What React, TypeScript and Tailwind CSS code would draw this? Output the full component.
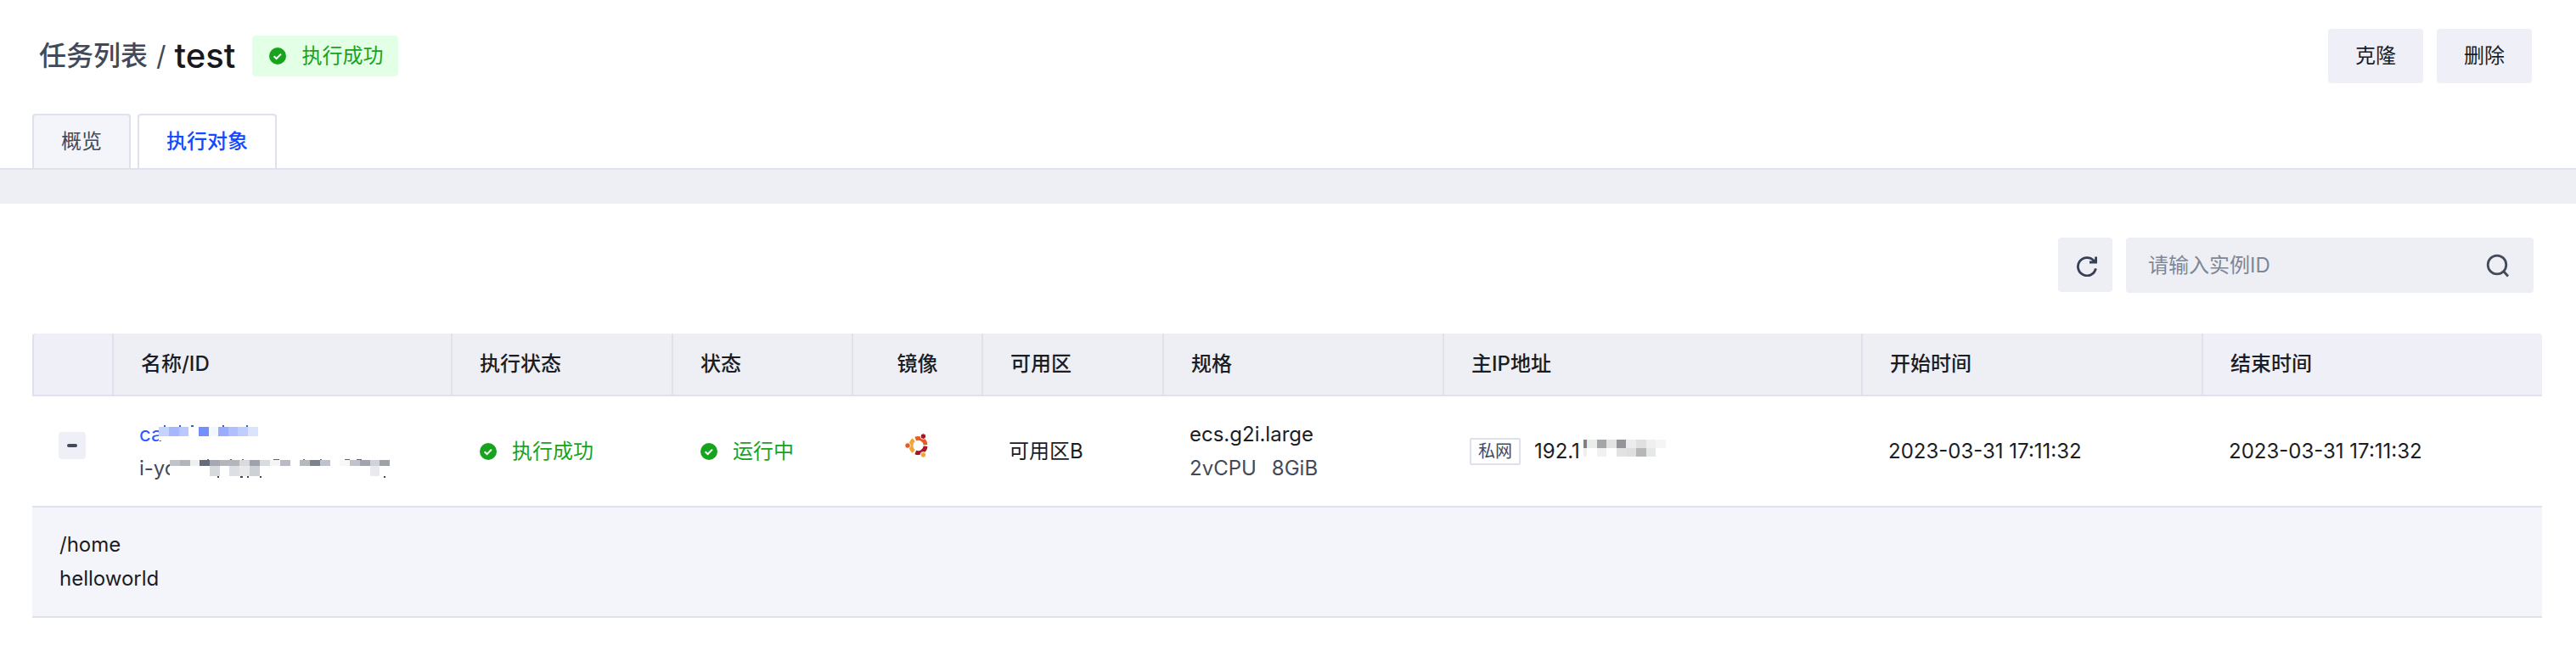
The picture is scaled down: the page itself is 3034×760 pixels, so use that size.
import React from "react";

function CheckBadge() {
  return (
    <svg viewBox="0 0 20 20" className="size-5 shrink-0" aria-hidden="true">
      <circle cx="10" cy="10" r="10" fill="#18a31f" />
      <path d="M5.6 10.2l3 2.8 5.4-5.4" fill="none" stroke="#fff" strokeWidth="2" />
    </svg>
  );
}

function UbuntuLogo() {
  return (
    <svg viewBox="0 0 28 30" className="h-[30px] w-7" aria-label="Ubuntu" role="img">
      <g fill="none" strokeWidth="4.8">
        <path d="M10.2 21.78 A8.6 8.6 0 0 1 10.2 8.22" stroke="#f4a42f" />
        <path d="M12.28 7.03 A8.6 8.6 0 0 1 24.07 14.25" stroke="#e95a24" />
        <path d="M24.07 15.75 A8.6 8.6 0 0 1 12.28 22.97" stroke="#ab1420" />
      </g>
      <g stroke="#fff" strokeWidth="1">
        <circle cx="3" cy="15" r="3.3" fill="#e95a24" />
        <circle cx="21.4" cy="4.1" r="3.3" fill="#ab1420" />
        <circle cx="21.4" cy="25.9" r="3.3" fill="#f4a42f" />
      </g>
    </svg>
  );
}

type Block = [number, number, number, number, string];

const nameBlocks: Block[] = [
  [0, 2, 12, 11, "#c6d3ff"], [12, 2, 12, 11, "#a6b7ff"], [24, 2, 11, 11, "#bac8ff"],
  [47, 2, 12, 11, "#7390ff"], [59, 2, 11, 11, "#f3f7ff"], [70, 2, 12, 11, "#9bacff"],
  [82, 2, 11, 11, "#afbfff"], [93, 2, 12, 11, "#c0cdff"], [105, 2, 12, 11, "#dbe4ff"],
  [6, 0, 2, 2, "#2a57ff"], [24, 0, 2, 2, "#2a57ff"], [38, 0, 3, 2, "#2a57ff"], [75, 0, 2, 2, "#2a57ff"], [103, 0, 2, 2, "#2a57ff"],
];

const idBlocks: Block[] = [
  [0, 1, 12, 7, "#c0c4c9"], [12, 1, 12, 7, "#b0b5bb"], [24, 1, 11, 7, "#eeeff0"], [35, 1, 12, 7, "#646b79"],
  [47, 1, 12, 7, "#a5a8b2"], [59, 1, 23, 7, "#b4b6bb"], [82, 1, 12, 7, "#d8dade"], [94, 1, 12, 7, "#9da2ac"],
  [106, 1, 12, 7, "#d9dcdf"], [118, 1, 12, 7, "#f5f5f6"], [130, 1, 12, 7, "#b7bbc2"],
  [153, 1, 12, 7, "#b5b9be"], [165, 1, 12, 7, "#7a828d"], [177, 1, 12, 7, "#c0c3c9"],
  [200, 1, 12, 7, "#f8f8f8"], [212, 1, 12, 7, "#c0c3c9"], [224, 1, 12, 7, "#9fa4ad"], [236, 1, 11, 7, "#cfd2d8"], [247, 1, 12, 7, "#9da2a9"],
  [47, 8, 12, 12, "#d7d9dd"], [70, 8, 12, 12, "#dcdfe4"], [82, 8, 12, 12, "#e9e9eb"], [94, 8, 12, 12, "#cdd0d5"], [236, 8, 11, 12, "#e9eaee"],
  [44, 0, 2, 1, "#5a6270"], [71, 0, 2, 1, "#5a6270"], [85, 0, 2, 1, "#5a6270"], [122, 0, 7, 1, "#5a6270"], [157, 0, 2, 1, "#5a6270"],
  [177, 0, 2, 1, "#5a6270"], [206, 0, 6, 1, "#5a6270"], [220, 0, 6, 1, "#5a6270"],
  [56, 20, 2, 2, "#3f4858"], [83, 20, 3, 2, "#3f4858"], [91, 20, 2, 2, "#3f4858"], [106, 20, 2, 2, "#3f4858"], [252, 20, 2, 2, "#3f4858"],
];

const ipBlocks: Block[] = [
  [0, 0, 4, 10, "#808185"], [4, 0, 12, 10, "#ebecec"], [16, 0, 11, 10, "#a5a6a9"], [27, 0, 12, 10, "#e3e3e4"],
  [39, 0, 11, 10, "#949599"], [50, 0, 12, 10, "#ececed"], [62, 0, 12, 10, "#dfe0e0"], [74, 0, 11, 10, "#efefef"], [85, 0, 12, 10, "#f5f5f5"],
  [0, 10, 4, 10, "#efefef"], [16, 10, 11, 10, "#f1f1f1"], [39, 10, 12, 10, "#e2e2e3"], [51, 10, 11, 10, "#dfdfe0"],
  [62, 10, 12, 10, "#b6b7b9"], [74, 10, 11, 10, "#e6e7e7"],
];

function Mosaic({ blocks, width, height }: { blocks: Block[]; width: number; height: number }) {
  return (
    <svg width={width} height={height} viewBox={`0 0 ${width} ${height}`} shapeRendering="crispEdges" aria-hidden="true" className="relative shrink-0 bg-white">
      {blocks.map(([x, y, w, h, fill], i) => (
        <rect key={i} x={x} y={y} width={w} height={h} fill={fill} />
      ))}
    </svg>
  );
}

function Status({ children }: { children: React.ReactNode }) {
  return (
    <span className="flex items-center gap-[18px] text-[#18a31f]">
      <CheckBadge />
      {children}
    </span>
  );
}

const th = "border-r-2 border-b-2 border-[#dfe2ec] px-8 text-left font-medium";
const td = "border-b-2 border-[#dfe2ec] px-[30px]";
const statusTd = "border-b-2 border-[#dfe2ec] px-8";

export default function App() {
  return (
    <div className="bg-white font-['Inter','Noto_Sans_CJK_SC',sans-serif] text-2xl text-[#1b1d24]">
      <header className="border-b-2 border-[#dfe2ec]">
        <div className="flex items-center justify-between pt-[34px] pr-[52px] pl-[46px]">
          <div className="flex items-center">
            <nav className="flex items-center gap-2.5 text-[32px] leading-10 text-[#424a5a]">
              <a href="#tasks" className="font-medium">任务列表</a>
              <span>/</span>
            </nav>
            <h1 className="ml-2.5 text-[40px] leading-10 font-medium text-[#17191f]">test</h1>
            <span className="ml-5 flex h-12 items-center rounded bg-[#e3ffe5] pr-[18px] pl-5">
              <Status>执行成功</Status>
            </span>
          </div>
          <div className="flex gap-4">
            <button className="h-16 rounded bg-[#efeff8] px-8">克隆</button>
            <button className="h-16 rounded bg-[#efeff8] px-8">删除</button>
          </div>
        </div>
        <div role="tablist" className="mt-9 flex gap-2 pl-[38px]">
          <button role="tab" aria-selected="false" className="h-16 rounded-t border-2 border-b-0 border-[#dfe2ec] bg-[#f4f5fb] px-8 text-[#424a5a]">
            概览
          </button>
          <button role="tab" aria-selected="true" className="h-16 rounded-t border-2 border-b-0 border-[#dfe2ec] bg-white px-8 font-medium text-[#1549ff]">
            执行对象
          </button>
        </div>
      </header>
      <div className="h-10 bg-[#eeeff5]" />
      <main className="pt-10 pr-10 pb-8 pl-[38px]">
        <div className="mr-2.5 flex items-start justify-end gap-4">
          <button aria-label="刷新" className="flex size-16 items-center justify-center rounded bg-[#eeeff5] pt-1 pl-1">
            <svg viewBox="0 0 24 24" className="size-6" fill="none" stroke="#343f59" strokeWidth="2.8" aria-hidden="true">
              <path d="M20.2 5.4 A10.6 10.6 0 1 0 22.4 14.4" />
              <path d="M22.6 0.5 V7 H15" />
              <path d="M16.5 7 L22.6 2.5 V7 Z" fill="#343f59" stroke="none" />
            </svg>
          </button>
          <label className="flex h-[65px] w-[480px] items-center rounded bg-[#eeeff5] pr-7 pl-[26px]">
            <input aria-label="实例ID" placeholder="请输入实例ID" className="min-w-0 flex-1 bg-transparent outline-none placeholder:text-[#7d8796]" />
            <svg viewBox="0 0 28 28" className="size-7" fill="none" stroke="#424b5b" strokeWidth="2.8" aria-hidden="true">
              <circle cx="13" cy="13" r="10.8" />
              <path d="M20.5 20.5 L26 26.5" />
            </svg>
          </label>
        </div>
        <table className="mt-12 w-full table-fixed border-separate border-spacing-0 whitespace-nowrap">
          <colgroup>
            <col className="w-24" />
            <col className="w-[399px]" />
            <col className="w-[260px]" />
            <col className="w-[212px]" />
            <col className="w-[153px]" />
            <col className="w-[213px]" />
            <col className="w-[330px]" />
            <col className="w-[493px]" />
            <col className="w-[401px]" />
            <col className="w-[399px]" />
          </colgroup>
          <thead className="bg-[#eeeff5]">
            <tr className="h-[74px]">
              <th aria-label="展开" className="rounded-tl border-r-2 border-b-2 border-l-2 border-[#dfe2ec] bg-[#efeff8]" />
              <th className={th}>名称/ID</th>
              <th className={th}>执行状态</th>
              <th className={th}>状态</th>
              <th className="border-r-2 border-b-2 border-[#dfe2ec] text-center font-medium">镜像</th>
              <th className={th}>可用区</th>
              <th className={th}>规格</th>
              <th className={th}>主IP地址</th>
              <th className={th}>开始时间</th>
              <th className="rounded-tr border-b-2 border-[#dfe2ec] bg-[#efeff8] px-8 text-left font-medium">结束时间</th>
            </tr>
          </thead>
          <tbody>
            <tr className="h-[131px]">
              <td className="border-b-2 border-[#dfe2ec] pr-0.5 pb-3.5">
                <button aria-label="收起" className="mx-auto flex size-8 items-center justify-center rounded bg-[#efeff8]">
                  <span className="h-1 w-3 rounded-xs bg-[#424a5a]" />
                </button>
              </td>
              <td className={td}>
                <div className="flex h-10 items-center text-[#2a57ff]">
                  <a href="#instance">ca</a>
                  <span className="-ml-1 flex pb-1"><Mosaic blocks={nameBlocks} width={118} height={18} /></span>
                </div>
                <div className="flex h-10 items-center text-[#424a5a]">
                  <span>i-yc</span>
                  <span className="-ml-2 flex"><Mosaic blocks={idBlocks} width={260} height={22} /></span>
                </div>
              </td>
              <td className={statusTd}><Status>执行成功</Status></td>
              <td className={statusTd}><Status>运行中</Status></td>
              <td className="border-b-2 border-[#dfe2ec] pr-1 pb-3.5">
                <div className="flex justify-center"><UbuntuLogo /></div>
              </td>
              <td className={td}>可用区B</td>
              <td className={td}>
                <div className="leading-10">ecs.g2i.large</div>
                <div className="flex gap-[18px] leading-10 text-[#424a5a]"><span>2vCPU</span><span>8GiB</span></div>
              </td>
              <td className={td}>
                <div className="flex items-center">
                  <span className="mr-4 flex h-8 items-center rounded-xs border-2 border-[#dfe0ea] px-2 text-xl text-[#424a68]">私网</span>
                  <span>192.1</span>
                  <span className="ml-1 flex pb-2"><Mosaic blocks={ipBlocks} width={98} height={20} /></span>
                </div>
              </td>
              <td className={td}>2023-03-31 17:11:32</td>
              <td className={td}>2023-03-31 17:11:32</td>
            </tr>
            <tr className="h-[130px] bg-[#f4f5fa]">
              <td colSpan={10} className="border-b-2 border-[#dfe2ec] px-8 leading-10">
                <div>/home</div>
                <div>helloworld</div>
              </td>
            </tr>
          </tbody>
        </table>
      </main>
    </div>
  );
}
